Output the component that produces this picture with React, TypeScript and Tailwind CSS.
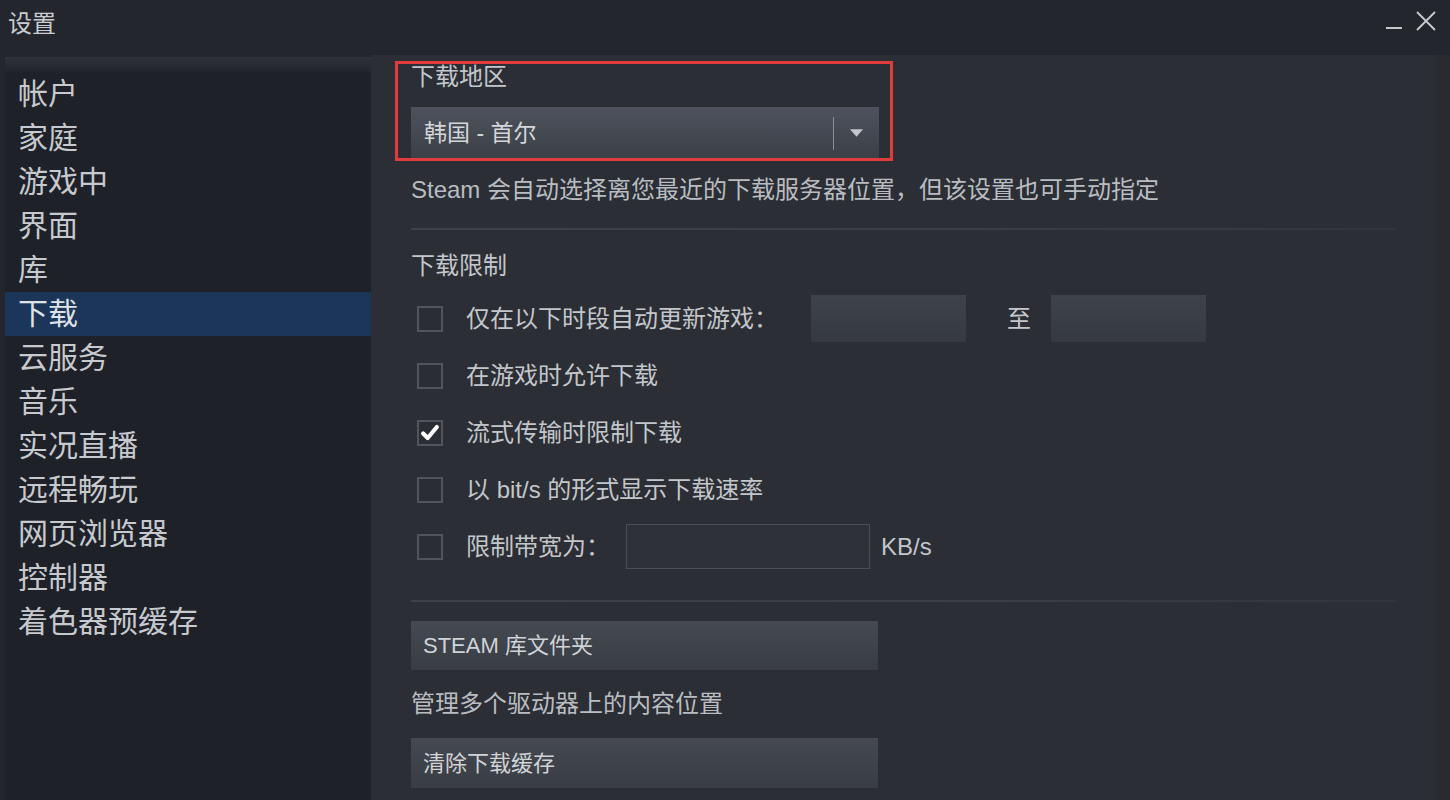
import React from 'react';

const FONT = { fontFamily: '"Liberation Sans", "Noto Sans CJK SC", sans-serif' };

const navItems = [
  '帐户',
  '家庭',
  '游戏中',
  '界面',
  '库',
  '下载',
  '云服务',
  '音乐',
  '实况直播',
  '远程畅玩',
  '网页浏览器',
  '控制器',
  '着色器预缓存',
];

function Checkbox({ checked }: { checked?: boolean }) {
  return (
    <div className="ml-[6px] mr-[23px] flex h-[26px] w-[26px] shrink-0 items-center justify-center border-2 border-[#50545b] bg-[#2a2d33]">
      {checked && (
        <svg viewBox="0 0 24 24" className="h-[24px] w-[24px]">
          <path d="M4.5 12.5 L9.5 17.5 L19.5 5.5" fill="none" stroke="#ffffff" strokeWidth="4.5" strokeLinecap="round" strokeLinejoin="round" />
        </svg>
      )}
    </div>
  );
}

function Divider() {
  return <div className="h-[2px] w-[985px] bg-gradient-to-r from-[#3d4148] via-[#3a3e45] to-[#32363c]" />;
}

function GreyButton({ label, className = '' }: { label: string; className?: string }) {
  return (
    <div className={`flex w-[467px] items-center bg-gradient-to-b from-[#454952] to-[#383c43] pl-[12px] text-[22px] text-[#d0d3d7] ${className}`}>
      {label}
    </div>
  );
}

export default function App() {
  return (
    <div className="flex h-[800px] w-[1450px] flex-col overflow-hidden bg-[#23262c]" style={FONT}>
      {/* title bar */}
      <div className="flex h-[55px] shrink-0 items-start justify-between">
        <div className="pl-[8px] pt-[9px] text-[24px] leading-[30px] text-[#c9ccd0]">设置</div>
        <div className="flex items-start pr-[14px] pt-[11px]">
          <svg viewBox="0 0 16 20" className="h-[20px] w-[16px]">
            <rect x="0" y="16" width="16" height="2" fill="#c3c6cb" />
          </svg>
          <svg viewBox="0 0 20 20" className="ml-[14px] h-[20px] w-[20px]">
            <path d="M1 1 L19 19 M19 1 L1 19" stroke="#c9ccd0" strokeWidth="1.8" />
          </svg>
        </div>
      </div>

      <div className="flex min-h-0 flex-1">
        {/* sidebar */}
        <div className="ml-[5px] mt-[2px] flex w-[366px] shrink-0 flex-col bg-[#1f2128]">
          <div className="h-[15px] bg-gradient-to-b from-[#2e323a] to-[#22252c]" />
          {navItems.map((item) => (
            <div
              key={item}
              className={`flex h-[44px] items-center pl-[13px] text-[30px] leading-[44px] ${
                item === '下载' ? 'bg-[#1b3658] text-[#dfe2e6]' : 'text-[#c6c9ce]'
              }`}
            >
              {item}
            </div>
          ))}
        </div>

        {/* main */}
        <div className="flex min-w-0 flex-1 bg-[#2b2e34]">
          <div className="flex flex-1 flex-col pl-[40px] pt-[7px] text-[24px] text-[#c3c6cb]">
            <div className="relative">
              <div className="pointer-events-none absolute left-[-16px] top-[-1px] h-[100px] w-[498px] border-[3px] border-[#e23b3d]" />
              <div className="h-[30px] leading-[30px]">下载地区</div>
              <div className="mt-[15px] flex h-[52px] w-[468px] items-center bg-gradient-to-b from-[#4d525c] to-[#3b3f47]">
                <div className="flex-1 pl-[13px] text-[23px] text-[#d3d6da]">韩国 - 首尔</div>
                <div className="h-[33px] w-[1px] bg-[#8b8f96]" />
                <svg viewBox="0 0 14 8" className="mx-[16px] h-[8px] w-[13px]">
                  <path d="M0 0 L14 0 L7 8 Z" fill="#c4c7cc" />
                </svg>
              </div>
            </div>

            <div className="mt-[16px] h-[30px] leading-[30px] text-[#b9bdc2]">
              Steam 会自动选择离您最近的下载服务器位置，但该设置也可手动指定
            </div>

            <div className="mt-[23px]">
              <Divider />
            </div>

            <div className="mt-[21px] h-[30px] leading-[30px]">下载限制</div>

            <div className="mt-[9px] flex flex-col">
              <div className="flex h-[57px] items-center">
                <Checkbox />
                <span className="w-[345px] shrink-0">仅在以下时段自动更新游戏：</span>
                <div className="h-[47px] w-[155px] bg-gradient-to-b from-[#3e424b] to-[#353940]" />
                <span className="ml-[41px] mr-[20px]">至</span>
                <div className="h-[47px] w-[155px] bg-gradient-to-b from-[#3e424b] to-[#353940]" />
              </div>
              <div className="flex h-[57px] items-center">
                <Checkbox />
                <span>在游戏时允许下载</span>
              </div>
              <div className="flex h-[57px] items-center">
                <Checkbox checked />
                <span>流式传输时限制下载</span>
              </div>
              <div className="flex h-[57px] items-center">
                <Checkbox />
                <span>以 bit/s 的形式显示下载速率</span>
              </div>
              <div className="flex h-[57px] items-center">
                <Checkbox />
                <span className="w-[160px] shrink-0">限制带宽为：</span>
                <div className="h-[45px] w-[244px] border border-[#4a4e56] bg-[#2e3138]" />
                <span className="ml-[11px]">KB/s</span>
              </div>
            </div>

            <div className="mt-[25px]">
              <Divider />
            </div>

            <GreyButton label="STEAM 库文件夹" className="mt-[19px] h-[49px]" />

            <div className="mt-[19px] h-[30px] leading-[30px] text-[#b9bdc2]">管理多个驱动器上的内容位置</div>

            <GreyButton label="清除下载缓存" className="mt-[19px] h-[50px]" />
          </div>
          <div className="w-[14px] shrink-0 bg-[#292b30]" />
        </div>
      </div>
    </div>
  );
}
